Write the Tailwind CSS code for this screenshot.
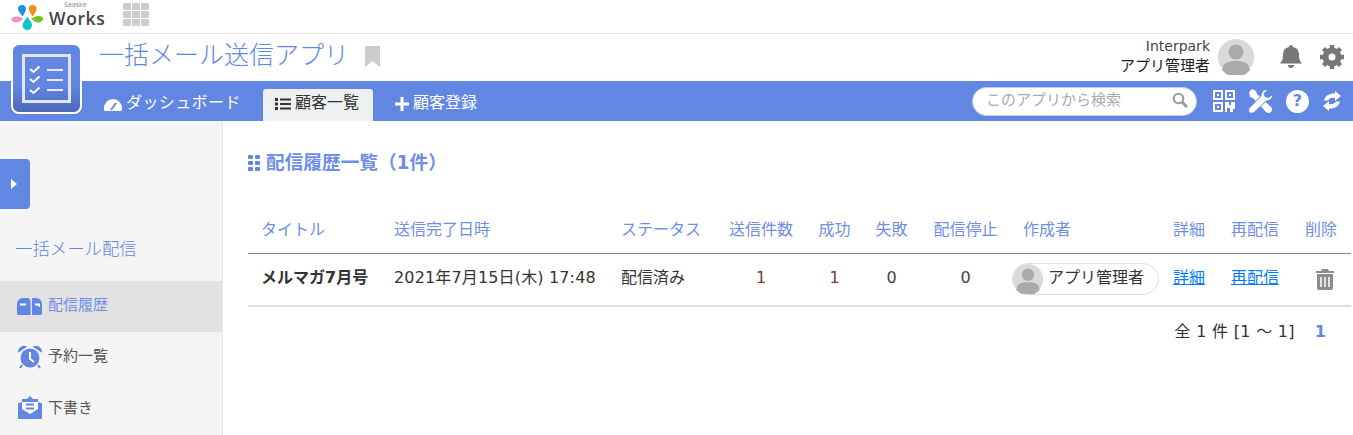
<!DOCTYPE html>
<html lang="ja">

<head>
  <meta charset="utf-8">
  <script src="https://cdn.jsdelivr.net/npm/@tailwindcss/browser@4"></script>
</head>

<body class="h-[435px] overflow-hidden bg-white font-['DejaVu_Sans','Noto_Sans_CJK_JP',sans-serif] text-[#333]">
  <!-- top bar -->
  <div class="flex h-[34px] items-center border-b border-[#e3e3e3] pl-[11px]">
    <svg width="35" height="27" viewBox="0 0 35 27" class="mt-[-1px]">
      <path d="M11 2c2.700 0 4.300 2 4 4.200-.3 2.300-2 4.500-3.200 7.300-1.700-2.600-4.500-4.900-4.800-7.300C6.700 3.800 8.300 2 11 2z" fill="#1e90e6" />
      <path d="M21.500 2c2.700 0 4.400 1.800 4.200 4.200-.3 2.400-2.700 4.700-4.200 7.300-1.300-2.800-3.200-5-3.700-7.300-.4-2.200 1.200-4.200 3.700-4.200z" fill="#f08c1e" />
      <path d="M0 16.500c1.300-3 4.500-3.300 7.500-2.700 2 .4 3.500 1 5 1.800-2.200 2-4.500 4-7.500 4-2.500 0-4-1.300-5-3.100z" fill="#f78fc8" />
      <path d="M32.500 15.800c-1.300-3-4.500-3-7.500-2.300-2 .5-3.500 1.200-5 2.100 2.200 1.900 4.500 4 7.500 4 2.500 0 4-1.900 5-3.800z" fill="#7cc11e" />
      <path d="M16.300 13.500c1.400 3 4.700 5.500 4.700 8.700 0 2.800-2.100 4.800-4.700 4.800s-4.700-2-4.700-4.800c0-3.200 3.300-5.700 4.700-8.700z" fill="#14c4c4" />
    </svg>
    <div class="relative ml-[3px] mt-[3px] w-[56px] font-['Open_Sans',sans-serif] text-[17.500px] leading-[16px] font-semibold tracking-[0.6px] text-[#444]">
      Works
      <span class="absolute top-[-9px] left-[15px] text-[7px] leading-[8px] font-normal tracking-normal text-[#888]">Saaske</span>
    </div>
    <div class="ml-[18px] mt-[-4px] grid grid-cols-3 gap-[1px]">
      <i class="h-[7px] w-[8px] rounded-[1px] bg-[#ccc]"></i><i class="h-[7px] w-[8px] rounded-[1px] bg-[#ccc]"></i><i class="h-[7px] w-[8px] rounded-[1px] bg-[#ccc]"></i>
      <i class="h-[7px] w-[8px] rounded-[1px] bg-[#ccc]"></i><i class="h-[7px] w-[8px] rounded-[1px] bg-[#ccc]"></i><i class="h-[7px] w-[8px] rounded-[1px] bg-[#ccc]"></i>
      <i class="h-[7px] w-[8px] rounded-[1px] bg-[#ccc]"></i><i class="h-[7px] w-[8px] rounded-[1px] bg-[#ccc]"></i><i class="h-[7px] w-[8px] rounded-[1px] bg-[#ccc]"></i>
    </div>
  </div>

  <!-- app header -->
  <div class="relative">
    <!-- app icon sits over both header and nav -->
    <div class="absolute top-[9px] left-[11px] z-10 flex h-[71px] w-[71px] items-center justify-center rounded-[8px] border-2 border-white bg-gradient-to-b from-[#6287e3] from-60% to-[#4c68b5]">
      <svg width="49" height="49" viewBox="0 0 49 49" fill="none" stroke="#fff" stroke-width="2">
        <rect x="1.500" y="1.500" width="46" height="46" stroke="#dfe6f9" stroke-width="3" />
        <path d="M8 15l3.500 3 6-5.500M8 25l3.500 3 6-5.500M8 36l3.500 3 6-5.500" />
        <path d="M25 16h16M25 26h16M25 36h16" stroke="#e6ecfb" />
      </svg>
    </div>

    <div class="flex h-[47px] items-start justify-between">
      <div class="ml-[99px] flex items-center">
        <span class="text-[25px] leading-[43px] font-light text-[#6287e3]">一括メール送信アプリ</span>
        <svg width="15" height="21" viewBox="0 0 15 21" class="mt-[1px] ml-[16px]">
          <path d="M0 0h15v21l-7.500-6L0 21z" fill="#ccc" />
        </svg>
      </div>
      <div class="mt-[3px] flex items-center">
        <div class="text-right leading-[20px]">
          <div class="mt-[-1px] text-[14px] text-[#444]">Interpark</div>
          <div class="text-[15px] text-[#222]">アプリ管理者</div>
        </div>
        <svg width="36" height="36" viewBox="0 0 36 36" class="ml-[8px]">
          <circle cx="18" cy="18" r="18" fill="#d9d9d9" />
          <circle cx="18" cy="13" r="7.500" fill="#aaa" />
          <path d="M4 31c1-7 6-9 14-9s13 2 14 9a18 18 0 0 1-28 0z" fill="#aaa" />
        </svg>
        <svg width="24" height="26" viewBox="0 0 24 26" class="ml-[25px]">
          <path d="M12 1a2 2 0 0 1 2 2c4 .8 6 3.500 6 8 0 5 1.500 6.500 3 8.500H1C2.500 17.500 4 16 4 11c0-4.500 2-7.200 6-8a2 2 0 0 1 2-2z" fill="#777" />
          <path d="M9 21h6a3 3 0 0 1-6 0z" fill="#777" />
        </svg>
        <svg width="24" height="24" viewBox="0 0 24 24" class="mr-[9px] ml-[17px]">
          <circle cx="12" cy="12" r="6.500" fill="none" stroke="#777" stroke-width="6" />
          <path d="M12 0v6M12 18v6M0 12h6M18 12h6M3.500 3.500l4 4M16.500 16.500l4 4M20.500 3.500l-4 4M7.500 16.500l-4 4" stroke="#777" stroke-width="4.500" />
        </svg>
      </div>
    </div>

    <!-- blue nav -->
    <div class="flex h-[40px] items-end justify-between bg-[#6287e3]">
      <div class="ml-[104px] flex items-end text-[16px] text-white">
        <div class="flex h-[32px] w-[159px] items-center">
          <svg width="18" height="12" viewBox="0 0 18 12" class="mt-[-1px]">
            <path d="M9 0a9 9 0 0 1 9 9c0 1-.2 2-.5 3H.5C.2 11 0 10 0 9a9 9 0 0 1 9-9z" fill="#fff" />
            <path d="M7 11l5-7" stroke="#6287e3" stroke-width="2" />
          </svg>
          <span class="mt-[-4px] ml-[4px] tracking-[0.4px] text-[#fff]">ダッシュボード</span>
        </div>
        <div class="flex h-[32px] w-[110px] items-center rounded-t-[3px] bg-[#eef0f0] pl-[12px] text-[#333]">
          <svg width="16" height="12" viewBox="0 0 16 12" fill="#333" class="mt-[-2px]">
            <rect y="0" width="3" height="3" /><rect y="4.500" width="3" height="3" /><rect y="9" width="3" height="3" />
            <rect x="5" y="0.500" width="11" height="2" /><rect x="5" y="5" width="11" height="2" /><rect x="5" y="9.500" width="11" height="2" />
          </svg>
          <span class="mt-[-4px] ml-[4px]">顧客一覧</span>
        </div>
        <div class="ml-[22px] flex h-[32px] items-center">
          <svg width="14" height="14" viewBox="0 0 14 14" class="mt-[-2px]"><path d="M5.500 0h3v5.500H14v3H8.500V14h-3V8.500H0v-3h5.500z" fill="#fff" /></svg>
          <span class="mt-[-4px] ml-[4px]">顧客登録</span>
        </div>
      </div>
      <div class="flex h-[40px] items-center pr-[12px]">
        <div class="flex h-[29px] w-[225px] items-center justify-between rounded-full border border-[#ccd] bg-white pr-[8px] pl-[13px] text-[15px] text-[#aaa]">
          <span class="mt-[-2px]">このアプリから検索</span>
          <svg width="16" height="16" viewBox="0 0 16 16" fill="none" stroke="#999" class="mt-[-2px]">
            <circle cx="6.500" cy="6.500" r="4.800" stroke-width="2" />
            <path d="M10 10l5 5" stroke-width="3" />
          </svg>
        </div>
        <svg width="22" height="22" viewBox="0 0 22 22" fill="#fff" class="ml-[16px]">
          <path fill-rule="evenodd" d="M0 0h10v10H0zM2 2v6h6V2zM12 0h10v10H12zM14 2v6h6V2zM0 12h10v10H0zM2 14v6h6v-6z" />
          <rect x="4" y="4" width="2" height="2" /><rect x="16" y="4" width="2" height="2" /><rect x="4" y="16" width="2" height="2" />
          <path d="M12 12h4v3h2v-3h4v7h-2v3h-3v-4h-3v4h-2z" />
        </svg>
        <svg width="25" height="24" viewBox="0 0 25 24" class="ml-[13px]">
          <path d="M1 3l3-3 4 2 1 3 14 13c1.500 1.500 1.500 3.500 0 5s-3.500 1.500-5 0L5 9 2 8z" fill="#fff" />
          <path d="M24.500 5.500c.5 3-2 6.500-6.500 6.500L6 23.500c-1.300 1-3.500 1-4.700-.2S.2 20 1.500 18.800L13 7c0-4.500 3.500-7 7-6.500L16 4.500l1 3 3.500 1z" fill="#fff" stroke="#6287e3" stroke-width="1" />
        </svg>
        <div class="ml-[13px] flex h-[23px] w-[23px] items-center justify-center rounded-full bg-white text-[16px] leading-none font-bold text-[#6287e3]">?</div>
        <svg width="18" height="20" viewBox="0 0 18 20" fill="#fff" class="ml-[14px]">
          <path d="M12 0l6 5-6 5V7C9 6.500 6.500 7 5 9.500H1C2 4.500 7 2 12 2.500z" />
          <path d="M6 20l-6-5 6-5v3c3 .5 5.500 0 7-2.500h4C16 15.500 11 18 6 17.500z" />
        </svg>
      </div>
    </div>
  </div>

  <div class="flex h-[314px]">
    <!-- sidebar -->
    <aside class="w-[223px] shrink-0 border-r border-[#e8e8e8] bg-[#f5f5f5]">
      <div class="mt-[38px] flex h-[50px] w-[30px] items-center justify-center rounded-r-[4px] bg-[#6287e3]">
        <svg width="6" height="10" viewBox="0 0 6 10" class="mr-[2px]"><path d="M0 0l6 5-6 5z" fill="#fff" /></svg>
      </div>
      <div class="mt-[29px] pl-[15px] text-[17.400px] leading-[22px] font-light text-[#6287e3]">一括メール配信</div>
      <ul class="mt-[21px] text-[15px]">
        <li class="flex h-[51px] items-center bg-[#e2e2e2] pl-[17px] text-[#6f8fe6]">
          <svg width="25" height="17" viewBox="0 0 25 17">
            <path d="M6 0h5.500a5 5 0 0 1 2 4v13H1a1 1 0 0 1-1-1V6a6 6 0 0 1 6-6z" fill="#6287e3" />
            <path d="M15 0h4a6 6 0 0 1 6 6v10a1 1 0 0 1-1 1h-9z" fill="#6287e3" />
            <path d="M3 6.500h6M18 6.500h4v2" stroke="#fff" stroke-width="2" fill="none" />
          </svg>
          <span class="mt-[-2px] ml-[6px]">配信履歴</span>
        </li>
        <li class="flex h-[50px] items-center pl-[18px] text-[#555]">
          <svg width="24" height="24" viewBox="0 0 24 24">
            <circle cx="12" cy="13" r="9.500" fill="#6287e3" />
            <path d="M1 6a5 5 0 0 1 6-4zM23 6a5 5 0 0 0-6-4zM4 20l-2 3M20 20l2 3" fill="#6287e3" stroke="#6287e3" stroke-width="2" />
            <path d="M12 7v7l4 3" fill="none" stroke="#fff" stroke-width="2" />
          </svg>
          <span class="mt-[-2px] ml-[6px]">予約一覧</span>
        </li>
        <li class="flex h-[50px] items-center pl-[18px] text-[#555]">
          <svg width="24" height="23" viewBox="0 0 24 23">
            <path d="M1 7l3-1V3h5l3-3 3 3h5v3l3 1a1 1 0 0 1 1 1v14a1 1 0 0 1-1 1H1a1 1 0 0 1-1-1V8a1 1 0 0 1 1-1z" fill="#6287e3" />
            <path d="M4 6h16v7l-8 5-8-5z" fill="#fff" />
            <path d="M8 8.500h8M8 12.500h8" stroke="#6287e3" stroke-width="2" />
          </svg>
          <span class="mt-[2px] ml-[6px]">下書き</span>
        </li>
      </ul>
    </aside>

    <!-- main -->
    <main class="min-w-0 flex-1 pl-[25px]">
      <h2 class="mt-[30px] flex h-[24px] items-center text-[18.670px] font-bold text-[#6f8fe6]">
        <svg width="12" height="16" viewBox="0 0 12 16" fill="#6287e3" class="mr-[6px]">
          <rect width="5" height="4" rx="1" /><rect x="7" width="5" height="4" rx="1" />
          <rect y="6" width="5" height="4" rx="1" /><rect x="7" y="6" width="5" height="4" rx="1" />
          <rect y="12" width="5" height="4" rx="1" /><rect x="7" y="12" width="5" height="4" rx="1" />
        </svg>
        配信履歴一覧（1件）
      </h2>

      <table class="mt-[32px] w-[1103px] table-fixed border-collapse text-[16px]">
        <colgroup>
          <col class="w-[133px]"><col class="w-[227px]"><col class="w-[108px]"><col class="w-[90px]">
          <col class="w-[57px]"><col class="w-[57px]"><col class="w-[91px]"><col class="w-[149px]">
          <col class="w-[58px]"><col class="w-[74px]"><col class="w-[59px]">
        </colgroup>
        <thead>
          <tr class="h-[46px] border-b-[1.500px] border-[#888] text-[#6f8fe6]">
            <th class="pl-[13px] text-left font-normal">タイトル</th>
            <th class="pl-[13px] text-left font-normal">送信完了日時</th>
            <th class="pl-[13px] text-left font-normal">ステータス</th>
            <th class="text-center font-normal">送信件数</th>
            <th class="text-center font-normal">成功</th>
            <th class="text-center font-normal">失敗</th>
            <th class="text-center font-normal">配信停止</th>
            <th class="pl-[12px] text-left font-normal">作成者</th>
            <th class="pl-[13px] text-left font-normal">詳細</th>
            <th class="pl-[13px] text-left font-normal">再配信</th>
            <th class="pl-[13px] text-left font-normal">削除</th>
          </tr>
        </thead>
        <tbody>
          <tr class="h-[53px] border-b-2 border-[#ddd]">
            <td class="pb-[2px] pl-[13px] font-bold text-[#333]">メルマガ7月号</td>
            <td class="pb-[2px] pl-[13px] tracking-[0.15px] text-[#333]">2021年7月15日(木) 17:48</td>
            <td class="pb-[2px] pl-[13px] text-[#333]">配信済み</td>
            <td class="pb-[2px] text-center text-[#7a3b3b]">1</td>
            <td class="pb-[2px] text-center text-[#7a3b3b]">1</td>
            <td class="pb-[2px] text-center text-[#444]">0</td>
            <td class="pb-[2px] text-center text-[#444]">0</td>
            <td class="pl-[1px]">
              <div class="flex h-[32px] w-[147px] items-center rounded-full border border-[#ddd]">
                <svg width="30" height="30" viewBox="0 0 36 36">
                  <circle cx="18" cy="18" r="18" fill="#d9d9d9" />
                  <circle cx="18" cy="13" r="7.500" fill="#aaa" />
                  <path d="M4 31c1-7 6-9 14-9s13 2 14 9a18 18 0 0 1-28 0z" fill="#aaa" />
                </svg>
                <span class="mt-[-2px] ml-[5px] text-[#333]">アプリ管理者</span>
              </div>
            </td>
            <td class="pb-[2px] pl-[13px]"><a href="#" class="text-[#007bff] underline">詳細</a></td>
            <td class="pb-[2px] pl-[13px]"><a href="#" class="text-[#007bff] underline">再配信</a></td>
            <td class="pl-[24px]">
              <svg width="18" height="21" viewBox="0 0 18 21">
                <path d="M6 0h6l1 2h5v2H0V2h5z" fill="#8c8c8c" />
                <path d="M1 5h16v14a2 2 0 0 1-2 2H3a2 2 0 0 1-2-2z" fill="#8c8c8c" />
                <path d="M5 8v10M9 8v10M13 8v10" stroke="#fff" stroke-width="1.500" />
              </svg>
            </td>
          </tr>
        </tbody>
      </table>

      <div class="mt-[12px] flex w-[1103px] justify-end pr-[25px] text-[16px] leading-[26px] text-[#333]">
        <span class="tracking-[0.3px]">全 1 件 [1 ～ 1]</span>
        <span class="ml-[20px] font-bold text-[#6287e3]">1</span>
      </div>
    </main>
  </div>
</body>

</html>
